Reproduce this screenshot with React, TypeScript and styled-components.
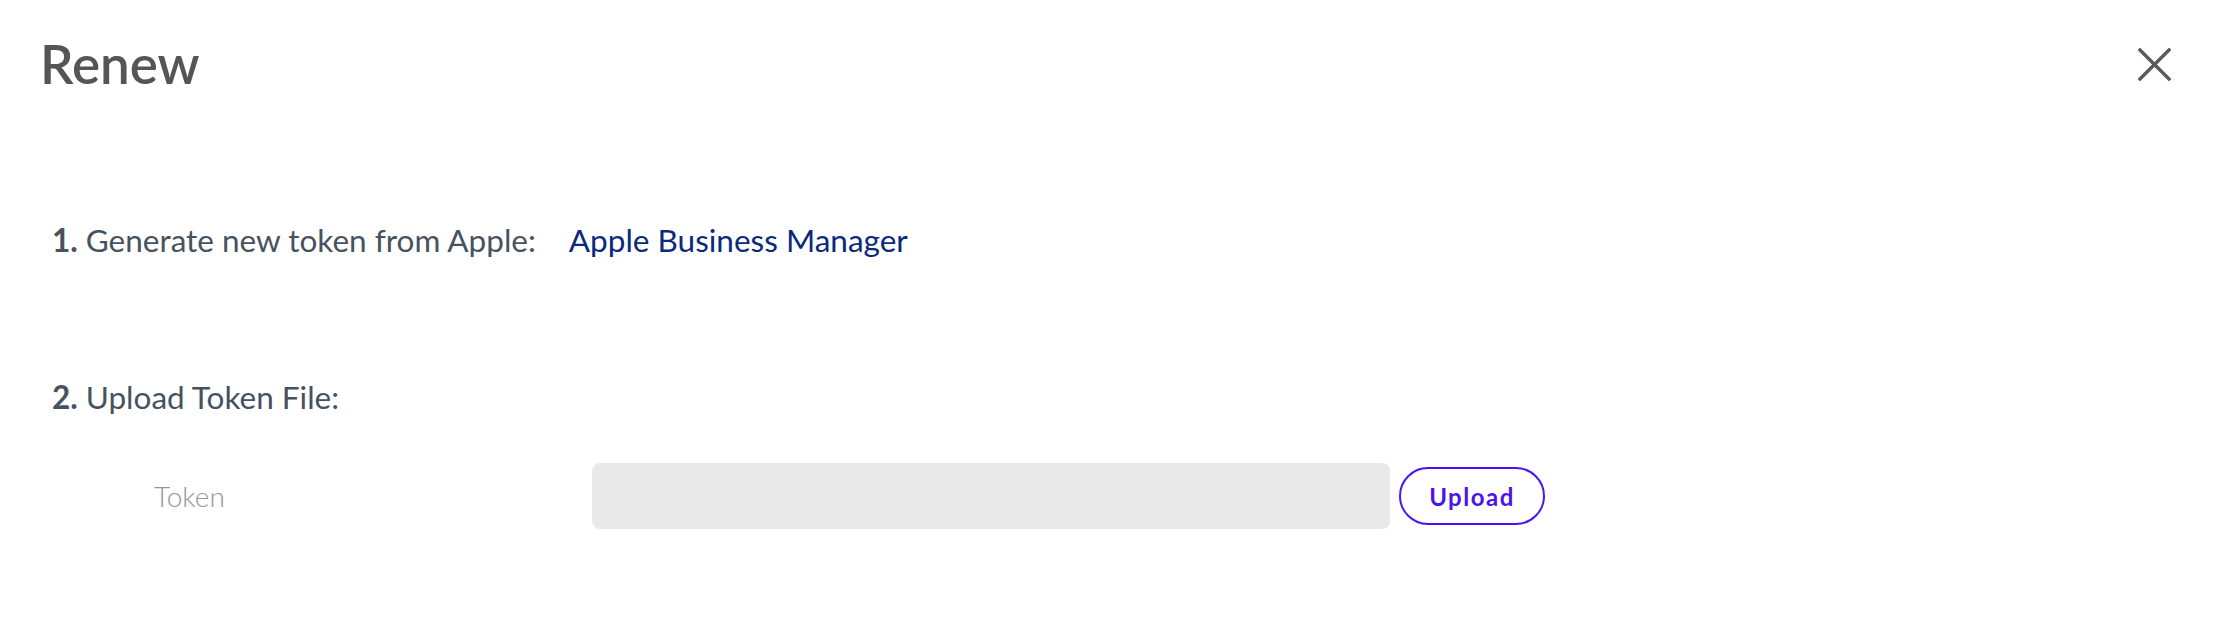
import React from 'react';
import styled, { createGlobalStyle } from 'styled-components';

const GlobalStyle = createGlobalStyle`
  html, body {
    margin: 0;
    padding: 0;
    background: #ffffff;
  }
  body {
    font-family: Lato, "Open Sans", sans-serif;
  }
`;

const Dialog = styled.div`
  width: 2220px;
  height: 618px;
  box-sizing: border-box;
  display: flex;
  flex-direction: column;
  background: #fff;
`;

const Header = styled.header`
  display: flex;
  align-items: center;
  justify-content: space-between;
  padding: 38px 49px 0 40px;
`;

const Title = styled.h1`
  margin: 0;
  font-size: 53px;
  line-height: 52px;
  font-weight: 600;
  color: #555555;
`;

const CloseButton = styled.button`
  width: 33px;
  height: 33px;
  padding: 0;
  border: 0;
  background: none;
  cursor: pointer;
  display: flex;
`;

const Body = styled.div`
  display: flex;
  flex-direction: column;
  padding: 0 0 0 52px;
`;

const Step = styled.p<{ $top: number }>`
  margin: ${({ $top }) => $top}px 0 0 0;
  display: flex;
  align-items: baseline;
  font-size: 31.5px;
  line-height: 32px;
  color: #475260;
`;

const StepNum = styled.strong`
  font-weight: 700;
  margin-right: 8px;
`;

const Link = styled.a`
  margin-left: 33px;
  color: #0b2a7c;
  text-decoration: none;
`;

const FieldRow = styled.div`
  display: flex;
  align-items: center;
  margin: 50px 0 0 102px;
`;

const FieldLabel = styled.label`
  width: 438px;
  font-size: 28px;
  line-height: 28px;
  font-weight: 300;
  color: #959595;
`;

const FileBox = styled.div`
  width: 798px;
  height: 66px;
  border-radius: 8px;
  background: #e9e9e9;
`;

const UploadButton = styled.button`
  margin-left: 9px;
  width: 146px;
  height: 58px;
  box-sizing: border-box;
  border: 2px solid #4c14ec;
  border-radius: 29px;
  background: #fff;
  color: #4c14ec;
  font-family: Lato, sans-serif;
  font-size: 24px;
  font-weight: 700;
  letter-spacing: 1.5px;
  cursor: pointer;
`;

const CloseIcon = () => (
  <svg width="33" height="33" viewBox="0 0 33 33">
    <path d="M2 2 L31 31 M31 2 L2 31" stroke="#5a5a5a" strokeWidth="3.4" strokeLinecap="square" fill="none" />
  </svg>
);

const App = () => (
  <>
    <GlobalStyle />
    <Dialog>
      <Header>
        <Title>Renew</Title>
        <CloseButton aria-label="Close">
          <CloseIcon />
        </CloseButton>
      </Header>
      <Body>
        <Step $top={134}>
          <StepNum>1.</StepNum>
          Generate new token from Apple:
          <Link href="#">Apple Business Manager</Link>
        </Step>
        <Step $top={125}>
          <StepNum>2.</StepNum>
          Upload Token File:
        </Step>
        <FieldRow>
          <FieldLabel htmlFor="token-file">Token</FieldLabel>
          <FileBox id="token-file" />
          <UploadButton type="button">Upload</UploadButton>
        </FieldRow>
      </Body>
    </Dialog>
  </>
);

export default App;
